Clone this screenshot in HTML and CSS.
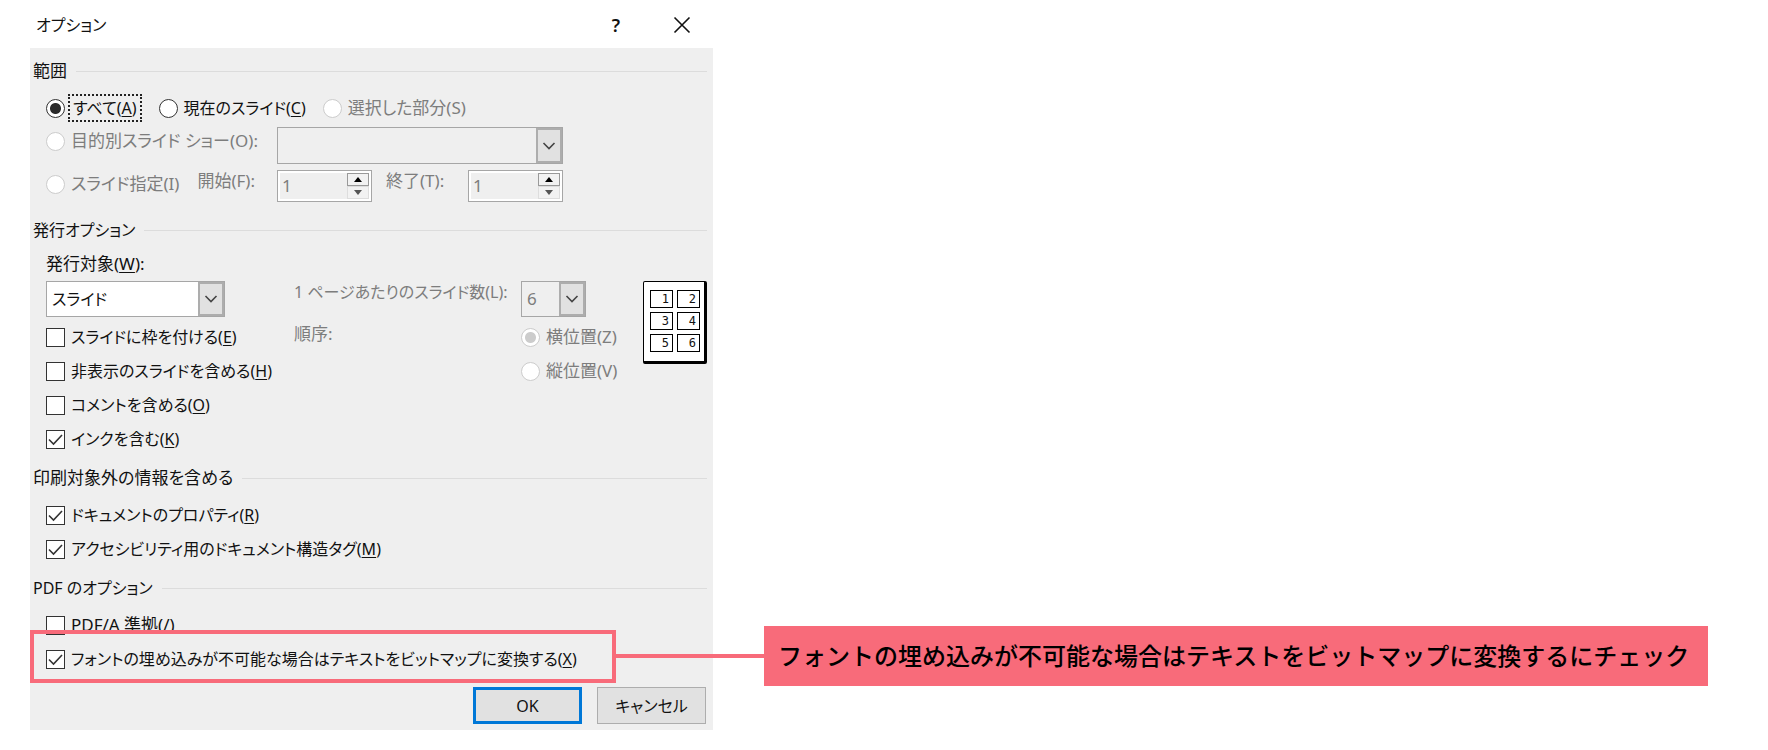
FILE: index.html
```html
<!DOCTYPE html>
<html lang="ja">
<head>
<meta charset="utf-8">
<title>オプション</title>
<link rel="stylesheet" href="styles.css">
</head>
<body>
<main class="dialog">
  <header class="titlebar">
    <h1 class="title">オプション</h1>
    <button class="title-btn help" type="button" aria-label="ヘルプ">?</button>
    <button class="title-btn" type="button" aria-label="閉じる">
      <svg width="18" height="18" viewBox="0 0 18 18"><path d="M1.500 1.500l15 15M16.500 1.500l-15 15" fill="none" stroke="#111" stroke-width="1.600"/></svg>
    </button>
  </header>
  <form class="body">
    <section class="section range">
      <h2 class="heading large">範囲</h2>
      <div class="row choices">
        <label class="opt"><input type="radio" name="range" checked><span class="focus">すべて(<u>A</u>)</span></label>
        <label class="opt"><input type="radio" name="range"><span>現在のスライド(<u>C</u>)</span></label>
        <label class="opt off large"><input type="radio" name="range" disabled><span>選択した部分(S)</span></label>
      </div>
      <div class="range-grid show-row">
        <label class="opt off large"><input type="radio" name="range" disabled><span>目的別スライド ショー(O):</span></label>
        <div class="combo off wide">
          <select disabled aria-label="目的別スライド ショー"><option></option></select>
          <span class="arrow"><svg width="14" height="8" viewBox="0 0 14 8"><path d="M1.500 1l5.500 5.500L12.500 1" fill="none" stroke="#444" stroke-width="1.600"/></svg></span>
        </div>
      </div>
      <div class="range-grid">
        <div class="slide-from">
          <label class="opt off large"><input type="radio" name="range" disabled><span>スライド指定(I)</span></label>
          <label class="spin-label large" for="from">開始(F):</label>
        </div>
        <div class="spins">
          <div class="spin">
            <input id="from" type="text" value="1" disabled>
            <span class="steps">
              <button class="step up" type="button" disabled aria-label="増やす"><svg width="8" height="5" viewBox="0 0 8 5"><path d="M4 0l4 5H0z" fill="#000"/></svg></button>
              <button class="step" type="button" disabled aria-label="減らす"><svg width="8" height="5" viewBox="0 0 8 5"><path d="M0 0h8L4 5z" fill="#555"/></svg></button>
            </span>
          </div>
          <label class="spin-label large" for="to">終了(T):</label>
          <div class="spin last">
            <input id="to" type="text" value="1" disabled>
            <span class="steps">
              <button class="step up" type="button" disabled aria-label="増やす"><svg width="8" height="5" viewBox="0 0 8 5"><path d="M4 0l4 5H0z" fill="#000"/></svg></button>
              <button class="step" type="button" disabled aria-label="減らす"><svg width="8" height="5" viewBox="0 0 8 5"><path d="M0 0h8L4 5z" fill="#555"/></svg></button>
            </span>
          </div>
        </div>
      </div>
    </section>

    <section class="section">
      <h2 class="heading">発行オプション</h2>
      <div class="publish">
        <div class="what">
          <label class="what-label large" for="what">発行対象(<u>W</u>):</label>
          <div class="combo what-combo">
            <select id="what"><option>スライド</option></select>
            <span class="arrow"><svg width="14" height="8" viewBox="0 0 14 8"><path d="M1.500 1l5.500 5.500L12.500 1" fill="none" stroke="#444" stroke-width="1.600"/></svg></span>
          </div>
          <label class="opt row"><input type="checkbox"><span>スライドに枠を付ける(<u>E</u>)</span></label>
          <label class="opt row"><input type="checkbox"><span>非表示のスライドを含める(<u>H</u>)</span></label>
          <label class="opt row"><input type="checkbox"><span>コメントを含める(<u>O</u>)</span></label>
          <label class="opt row"><input type="checkbox" checked><span>インクを含む(<u>K</u>)</span></label>
        </div>
        <div class="handout">
          <label class="off per-page" for="count">1 ページあたりのスライド数(L):</label>
          <div class="combo off count-combo large">
            <select id="count" disabled><option>6</option></select>
            <span class="arrow"><svg width="14" height="8" viewBox="0 0 14 8"><path d="M1.500 1l5.500 5.500L12.500 1" fill="none" stroke="#444" stroke-width="1.600"/></svg></span>
          </div>
          <span class="off order large">順序:</span>
          <div class="order-opts large">
            <label class="opt row off"><input type="radio" name="order" checked disabled><span>横位置(Z)</span></label>
            <label class="opt row off"><input type="radio" name="order" disabled><span>縦位置(V)</span></label>
          </div>
        </div>
        <ol class="preview">
          <li>1</li><li>2</li><li>3</li><li>4</li><li>5</li><li>6</li>
        </ol>
      </div>
    </section>

    <section class="section">
      <h2 class="heading large">印刷対象外の情報を含める</h2>
      <label class="opt row"><input type="checkbox" checked><span>ドキュメントのプロパティ(<u>R</u>)</span></label>
      <label class="opt row"><input type="checkbox" checked><span>アクセシビリティ用のドキュメント構造タグ(<u>M</u>)</span></label>
    </section>

    <section class="section">
      <h2 class="heading">PDF のオプション</h2>
      <label class="opt row large"><input type="checkbox"><span>PDF/A 準拠(<u>/</u>)</span></label>
      <div class="marked">
        <label class="opt row"><input type="checkbox" checked><span>フォントの埋め込みが不可能な場合はテキストをビットマップに変換する(<u>X</u>)</span></label>
        <aside class="note">
          <span class="frame"></span>
          <span class="lead"></span>
          <p class="callout">フォントの埋め込みが不可能な場合はテキストをビットマップに変換するにチェック</p>
        </aside>
      </div>
    </section>

    <footer class="actions">
      <button class="btn primary" type="button">OK</button>
      <button class="btn" type="button">キャンセル</button>
    </footer>
  </form>
</main>
</body>
</html>
```
FILE: styles.css
```css
* { box-sizing: border-box; }

body {
  margin: 0;
  background: #fff;
  color: #111;
  font: 16px/22px "Noto Sans", "Noto Sans CJK JP", sans-serif;
  font-feature-settings: "palt";
}

button, input, select {
  margin: 0;
  font: inherit;
  font-feature-settings: inherit;
  color: inherit;
}

u { text-underline-offset: 2px; text-decoration-thickness: 1px; }

.dialog {
  width: 683px;
  margin-left: 30px;
  white-space: nowrap;
}

/* title bar */
.titlebar {
  display: flex;
  align-items: center;
  height: 48px;
  padding: 2px 14px 0 6px;
}
.title {
  flex: 1;
  margin: 0;
  font-size: 16px;
  font-weight: 400;
}
.title-btn {
  display: grid;
  place-items: center;
  width: 34px;
  height: 34px;
  padding: 0;
  border: 0;
  background: none;
}
.help { margin-right: 32px; font-weight: 600; font-size: 18px; }

.body {
  padding: 12px 6px 6px 3px;
  background: #efefef;
}

/* sections */
.section {
  padding-left: 13px;
  margin-bottom: 11px;
}
.range { margin-bottom: 17px; }
.heading {
  display: flex;
  align-items: center;
  gap: 9px;
  margin: 0 0 9px -13px;
  font-size: 16px;
  font-weight: 400;
}
.heading::after {
  content: "";
  flex: 1;
  height: 1px;
  background: #dcdcdc;
}

.large { font-size: 17px; }

.opt {
  display: flex;
  align-items: center;
  gap: 6px;
  width: max-content;
}
.row { height: 34px; }
.off { color: #7d7d7d; }
.choices { display: flex; gap: 17px; }
.focus {
  margin-left: -3px;
  padding: 1px 3px;
  border: 2px dotted #222;
}

input[type="checkbox"],
input[type="radio"] {
  appearance: none;
  flex: none;
  width: 19px;
  height: 19px;
  border: 1px solid #333;
  background: #fff;
}
input[type="radio"] { border-radius: 50%; }
input[type="radio"]:checked {
  background: radial-gradient(circle, #2a2a2a 5px, #fff 6px);
}
input[type="radio"]:disabled { border-color: #ccc; }
input[type="radio"]:checked:disabled {
  background: radial-gradient(circle, #ccc 5px, #fff 6px);
}
input[type="checkbox"]:checked {
  background: #fff url("data:image/svg+xml,%3Csvg xmlns='http://www.w3.org/2000/svg' viewBox='0 0 17 17'%3E%3Cpath d='M2 8.500l4.500 4.500L15 4' fill='none' stroke='%23333' stroke-width='1.600'/%3E%3C/svg%3E");
}

/* combo boxes and spinners */
.combo {
  display: flex;
  height: 36px;
  border: 1px solid #a6a6a6;
  background: #fff;
}
.combo.off { background: #efefef; }
.combo select {
  appearance: none;
  flex: 1;
  min-width: 0;
  padding: 0 5px;
  border: 0;
  background: none;
  opacity: 1;
}
.arrow {
  display: grid;
  place-items: center;
  width: 26px;
  border: 2px solid #adadad;
  background: #e1e1e1;
}

.range-grid {
  display: grid;
  grid-template-columns: 231px 286px;
  align-items: start;
}
.range-grid .opt { height: 28px; }
.show-row { margin: 2px 0 6px; }
.wide { height: 37px; }
.slide-from {
  display: flex;
  align-items: flex-start;
  gap: 18px;
}
.spins {
  display: flex;
  align-items: flex-start;
  gap: 14px;
}
.spin-label { color: #7d7d7d; }
.spin {
  display: flex;
  width: 95px;
  height: 32px;
  padding: 2px;
  border: 1px solid #a6a6a6;
  background: #fff;
}
.last { margin-left: auto; }
.spin input {
  flex: 1;
  min-width: 0;
  padding: 0 2px;
  border: 0;
  background: #efefef;
  color: #7d7d7d;
  font-size: 17px;
}
.steps {
  display: flex;
  flex-direction: column;
  width: 22px;
}
.step {
  flex: 1;
  display: grid;
  place-items: center;
  padding: 0;
  border: 1px solid #ddd;
  background: #f2f2f2;
}
.step.up { border-color: #999; }

/* publish options */
.publish {
  display: flex;
  padding-top: 3px;
}
.what { width: 248px; }
.what-label { display: block; margin-bottom: 6px; }
.what-combo { width: 179px; margin-bottom: 3px; }
.handout {
  display: grid;
  grid-template-columns: 227px auto;
  grid-template-rows: 39px auto;
  align-items: start;
  padding-top: 28px;
}
.count-combo { width: 65px; }
.order { padding-top: 3px; }

.preview {
  display: grid;
  grid-template-columns: 23px 23px;
  grid-template-rows: repeat(3, 18px);
  gap: 4px;
  align-self: flex-start;
  width: 64px;
  height: 83px;
  margin: 28px 0 0 auto;
  padding: 8px 6px;
  border: solid #000;
  border-width: 1px 3px 3px 1px;
  border-radius: 2px;
  background: #fff;
  list-style: none;
}
.preview li {
  padding-right: 3px;
  border: 1px solid #000;
  font: 12px/16px "DejaVu Sans Mono", monospace;
  text-align: right;
}

/* annotation */
.marked { position: relative; }
.note {
  position: absolute;
  top: -16px;
  left: -16px;
  display: flex;
  align-items: center;
}
.frame {
  width: 586px;
  height: 53px;
  border: 4px solid #f86b7a;
}
.lead {
  width: 148px;
  height: 4px;
  background: #f86b7a;
}
.callout {
  margin: 0;
  padding: 11px 19px 13px 14px;
  background: #f86b7a;
  color: #000;
  font: 500 24px/36px "Noto Sans CJK JP", sans-serif;
  font-feature-settings: normal;
}

/* buttons */
.actions {
  display: flex;
  justify-content: flex-end;
  gap: 15px;
  padding-right: 1px;
}
.btn {
  width: 109px;
  height: 37px;
  padding: 0;
  border: 1px solid #adadad;
  background: #e1e1e1;
}
.primary { border: 3px solid #0078d7; }
```
